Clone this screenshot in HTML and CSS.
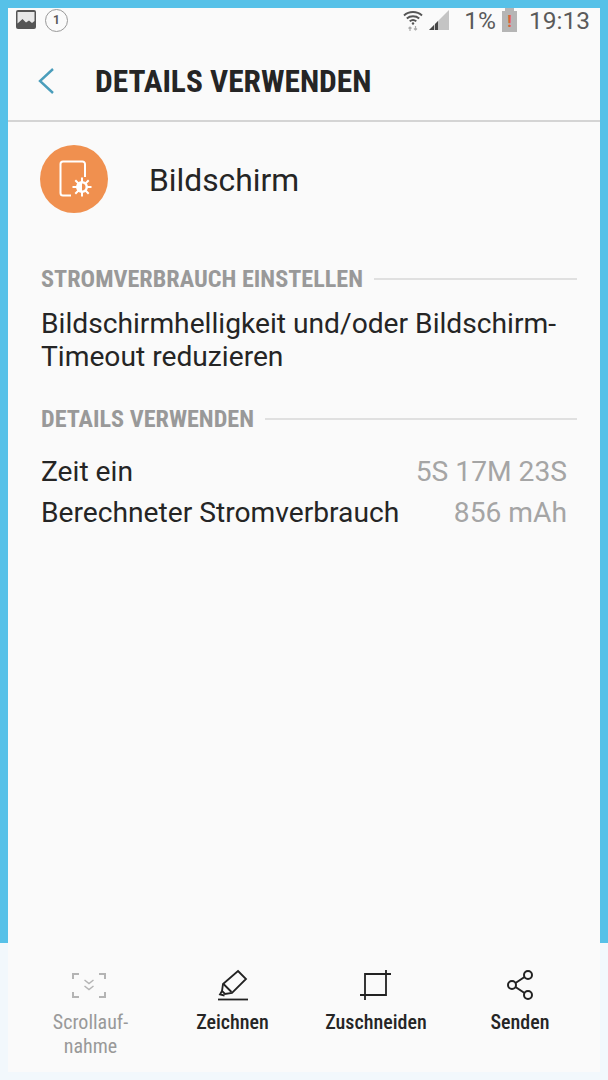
FILE: index.html
```html
<!DOCTYPE html>
<html lang="de">
<head>
    <meta charset="utf-8">
    <title>Details verwenden</title>
    <link rel="stylesheet" href="styles.css">
</head>
<body>
    <div class="screen">
        <div class="status-bar">
            <div class="status-left">
                <svg class="icon-gallery" width="20" height="20" viewBox="0 0 20 20">
                    <rect x="0" y="0" width="20" height="19" rx="2" fill="#555"/>
                    <path d="M1.500 2h17v9l-2.500 2-3-2.500-3 2-3.500-3.500-5 4.500z" fill="#e8e8e8"/>
                </svg>
                <span class="notif-count">1</span>
            </div>
            <div class="status-right">
                <svg class="icon-wifi" width="20" height="22" viewBox="0 0 20 22" fill="none" stroke="#555" stroke-width="1.900">
                    <path d="M1 6.500c5-4.600 13-4.600 18 0"/>
                    <path d="M3.800 9.500c3.400-3 9-3 12.400 0"/>
                    <path d="M6.700 12.300c2-1.600 4.600-1.600 6.600 0"/>
                    <circle cx="10" cy="14.500" r="1.200" fill="#555" stroke="none"/>
                    <path d="M7 22v-4m-1.500 1.500L7 18l1.500 1.500M12.500 17v4M11 19.500l1.500 1.500 1.500-1.500" stroke="#aaa" stroke-width="1.200"/>
                </svg>
                <svg class="icon-signal" width="20" height="20" viewBox="0 0 20 20">
                    <path d="M20 0v20H0z" fill="#c4c4c4"/>
                    <path d="M0 20l5-5v5zM6 14l3-3v9H6z" fill="#444"/>
                </svg>
                <span class="percent">1%</span>
                <span class="battery"><span class="battery-cap"></span><span class="battery-mark">!</span></span>
                <span class="clock">19:13</span>
            </div>
        </div>

        <header class="app-bar">
            <svg class="back" width="18" height="28" viewBox="0 0 18 28" fill="none" stroke="#4a9dbb" stroke-width="2.400">
                <path d="M16 2L3 14l13 12"/>
            </svg>
            <h1>DETAILS VERWENDEN</h1>
        </header>

        <main class="content">
            <div class="app-row">
                <div class="app-icon">
                    <svg width="40" height="40" viewBox="0 0 40 40" fill="none">
                        <path d="M17 36.500H9a2.500 2.500 0 0 1-2.500-2.500V5A2.500 2.500 0 0 1 9 2.500h19.500A2.500 2.500 0 0 1 31 5v13" stroke="#fff" stroke-width="2"/>
                        <circle cx="28" cy="28" r="6" fill="#fff"/>
                        <path d="M28 18.500v19M18.500 28h19M21.300 21.300l13.400 13.400M34.700 21.300L21.300 34.700" stroke="#fff" stroke-width="2"/>
                        <path d="M28 24.500a3.500 3.500 0 0 1 0 7z" fill="#f0904f"/>
                    </svg>
                </div>
                <span class="app-name">Bildschirm</span>
            </div>

            <section class="section">
                <div class="section-head">
                    <h2>STROMVERBRAUCH EINSTELLEN</h2>
                </div>
                <p class="hint">Bildschirmhelligkeit und/oder Bildschirm-<br>Timeout reduzieren</p>
            </section>

            <section class="section section-details">
                <div class="section-head">
                    <h2>DETAILS VERWENDEN</h2>
                </div>
                <div class="stat-row">
                    <span>Zeit ein</span>
                    <span class="stat-value">5S 17M 23S</span>
                </div>
                <div class="stat-row">
                    <span>Berechneter Stromverbrauch</span>
                    <span class="stat-value">856 mAh</span>
                </div>
            </section>
        </main>
    </div>

    <div class="toolbar-edge">
        <nav class="toolbar">
            <div class="tool tool-scroll">
                <svg width="38" height="32" viewBox="0 0 38 32" fill="none" stroke="#b4b4b4" stroke-width="2">
                    <path d="M1 10V5h6M27 5h6v5M1 23v5h6M27 28h6v-5"/>
                    <path d="M12.500 11l4.500 3.500 4.500-3.500M12.500 17l4.500 3.500 4.500-3.500" stroke-width="1.500"/>
                </svg>
                <span>Scrollauf-<br>nahme</span>
            </div>
            <div class="tool tool-draw">
                <svg width="32" height="32" viewBox="0 0 32 32" fill="none" stroke="#222" stroke-width="1.800">
                    <path d="M21 2l8 8-14 14-7 1-3-3 1-7z"/>
                    <path d="M6.500 15l8 8"/>
                    <path d="M5 22l-2 3.500 4.500 1"/>
                    <path d="M1 30.500h30"/>
                </svg>
                <span>Zeichnen</span>
            </div>
            <div class="tool tool-crop">
                <svg width="32" height="32" viewBox="0 0 32 32" fill="none" stroke="#222" stroke-width="1.800">
                    <path d="M0 26h26V1M5 31V5h26"/>
                </svg>
                <span>Zuschneiden</span>
            </div>
            <div class="tool tool-share">
                <svg width="32" height="32" viewBox="0 0 32 32" fill="none" stroke="#222" stroke-width="2">
                    <circle cx="24" cy="6" r="4"/>
                    <circle cx="8" cy="16" r="4"/>
                    <circle cx="24" cy="26" r="4"/>
                    <path d="M11.500 14l9-6M11.500 18l9 6"/>
                </svg>
                <span>Senden</span>
            </div>
        </nav>
    </div>
</body>
</html>
```

FILE: styles.css
```css
html, body {
    margin: 0;
    height: 1080px;
    overflow: hidden;
}

body {
    display: flex;
    flex-direction: column;
    background: #56c1e8;
    font-family: Roboto, "Liberation Sans", sans-serif;
    color: #252525;
}

.screen {
    flex: 1;
    margin: 8px 8px 0;
    background: #fafafa;
}

.status-bar {
    display: flex;
    justify-content: space-between;
    align-items: center;
    height: 24px;
    padding: 0 10px 0 8px;
    color: #5a5a5a;
}

.status-left,
.status-right {
    display: flex;
    align-items: center;
}

.notif-count {
    width: 21px;
    height: 21px;
    margin-left: 9px;
    border: 1px solid #999;
    border-radius: 50%;
    font-size: 12px;
    font-weight: 700;
    line-height: 21px;
    text-align: center;
}

.icon-signal {
    margin-left: 6px;
}

.percent {
    margin-left: 15px;
    font-size: 24.5px;
}

.battery {
    position: relative;
    width: 15px;
    height: 21px;
    margin-top: 3px;
    margin-left: 6px;
    background: #b5b5b5;
    text-align: center;
}

.battery-cap {
    position: absolute;
    top: -3px;
    left: 3px;
    width: 9px;
    height: 3px;
    background: #b5b5b5;
}

.battery-mark {
    display: block;
    color: #e0603a;
    font-size: 17px;
    font-weight: 700;
    line-height: 21px;
}

.clock {
    margin-left: 12px;
    font-size: 24.5px;
}

.app-bar {
    display: flex;
    align-items: center;
    box-sizing: border-box;
    height: 90px;
    padding: 8px 0 0 29px;
    border-bottom: 2px solid #d4d4d4;
}

.app-bar .back {
    margin-top: 1px;
}

.app-bar h1 {
    margin: 2px 0 0 40px;
    font-size: 31.4px;
    font-weight: 700;
    font-stretch: 75%;
    color: #252525;
}

.content {
    padding: 23px 23px 0 32px;
}

.app-row {
    display: flex;
    align-items: center;
}

.app-icon {
    display: flex;
    align-items: center;
    justify-content: center;
    width: 68px;
    height: 68px;
    border-radius: 50%;
    background: #f0904f;
}

.app-name {
    margin: 2px 0 0 41px;
    font-size: 31.8px;
}

.section {
    margin: 52px 0 0 1px;
}

.section-details {
    margin-top: 32px;
}

.section-head {
    display: flex;
    align-items: center;
    gap: 11px;
}

.section-head::after {
    content: "";
    flex: 1;
    height: 2px;
    background: #e0e0e0;
}

.section-head h2 {
    margin: 0;
    font-size: 24.2px;
    font-weight: 700;
    font-stretch: 75%;
    line-height: 28px;
    color: #999;
}

.hint {
    margin: 14px 0 0;
    font-size: 28.2px;
    line-height: 33px;
}

.stat-row {
    display: flex;
    justify-content: space-between;
    padding-right: 10px;
    font-size: 28.2px;
    line-height: 41px;
}

.section-details .section-head {
    margin-bottom: 18px;
}

.stat-value {
    color: #a5a5a5;
}

.toolbar-edge {
    height: 137px;
    padding: 0 8px 8px;
    box-sizing: border-box;
    background: #f2f8fc;
}

.toolbar {
    display: grid;
    grid-template-columns: 141px 143px 144px 144px;
    height: 100%;
    padding-left: 12px;
    background: #fafafa;
}

.tool {
    display: flex;
    flex-direction: column;
    align-items: center;
    padding-top: 26px;
    font-size: 20px;
    font-stretch: 87%;
    font-weight: 500;
    line-height: 24px;
    text-align: center;
}

.tool svg {
    margin-bottom: 9px;
}

.tool-scroll {
    color: #999;
    font-weight: 400;
}
```
